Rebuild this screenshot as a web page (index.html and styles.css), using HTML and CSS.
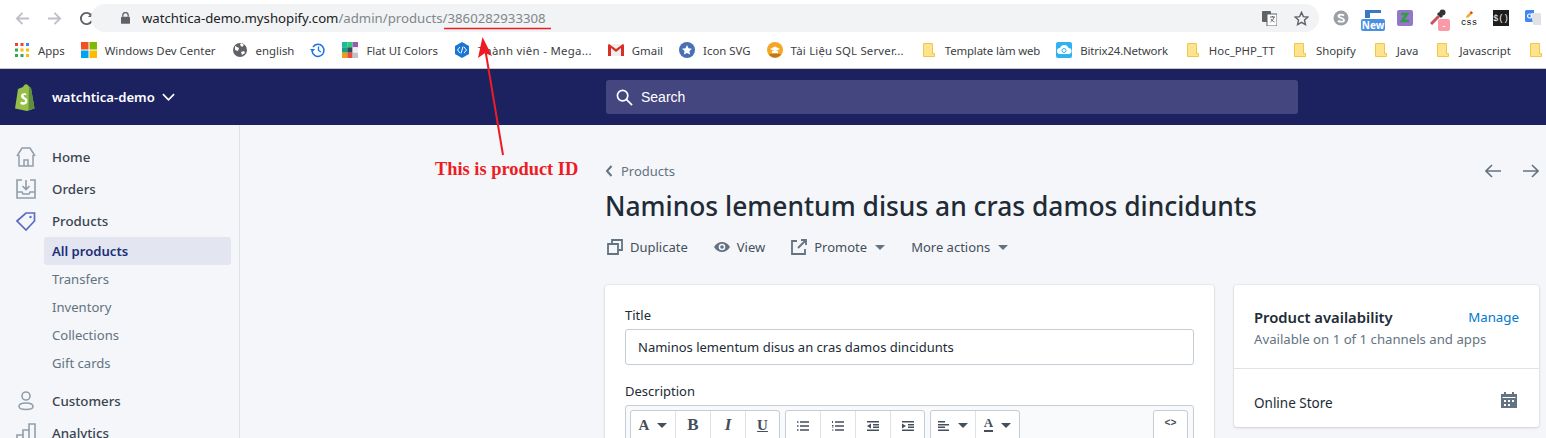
FILE: index.html
```html
<!DOCTYPE html>
<html lang="en">
<head>
    <meta charset="UTF-8">
    <meta name="viewport" content="width=device-width, initial-scale=1.0">
    <title>Product ID</title>
    <link rel="stylesheet" href="styles.css">
</head>
<body>
    <!-- browser chrome -->
    <div class="toolbar">
        <svg class="nav-btn" viewBox="0 0 16 16"><path d="M15 8H2M8 2L2 8l6 6" fill="none" stroke="#bdc1c6" stroke-width="2"/></svg>
        <svg class="nav-btn" viewBox="0 0 16 16"><path d="M1 8h13M8 2l6 6-6 6" fill="none" stroke="#bdc1c6" stroke-width="2"/></svg>
        <svg class="nav-btn reload" viewBox="0 0 16 16"><path d="M13.5 10.5A6 6 0 1 1 12.5 4" fill="none" stroke="#5f6368" stroke-width="2"/><path d="M9.5 6.5H15V1z" fill="#5f6368"/></svg>
        <div class="omnibox">
            <svg class="lock" viewBox="0 0 10 13"><path d="M2 5V3.5a3 3 0 0 1 6 0V5" fill="none" stroke="#5f6368" stroke-width="1.4"/><rect y="5" width="10" height="8" rx="1" fill="#5f6368"/></svg>
            <span class="url"><span class="host">watchtica-demo.myshopify.com</span>/admin/products/3860282933308</span>
            <svg class="omni-icon translate" viewBox="0 0 15 15"><rect width="9" height="11" rx="1" fill="#5f6368"/><rect x="5" y="3" width="10" height="12" fill="#fff" stroke="#5f6368"/><path d="M8 6h5M10.5 5v1M12 6c-.5 2-2 4-3.5 5M9 8c.8 1.5 2 2.5 3.5 3" fill="none" stroke="#5f6368"/></svg>
            <svg class="omni-icon star" viewBox="0 0 16 16"><path d="M8 1.5l2 4.5 4.8.5-3.6 3.2 1 4.8L8 12.1l-4.2 2.4 1-4.8L1.2 6.5 6 6z" fill="none" stroke="#5f6368" stroke-width="1.5"/></svg>
        </div>
        <div class="extensions">
            <svg class="ext ext-skype" viewBox="0 0 16 16"><circle cx="8" cy="8" r="7.5" fill="#9aa0a6"/><path d="M11 5.5C10 4.500 5.500 4 5.500 6c0 2.500 5.500 1.500 5.500 4.200 0 2-4.500 1.800-6 .5" fill="none" stroke="#fff" stroke-width="1.8"/></svg>
            <span class="ext-new"><svg viewBox="0 0 16 8"><path d="M0 8V0h16v3H5v5z" fill="#3b78c2"/></svg><span class="new-badge">New</span></span>
            <svg class="ext ext-z" viewBox="0 0 16 16"><rect width="16" height="16" rx="2" fill="#9575cd"/><path d="M4 4h6L5 11h7" fill="none" stroke="#2e9e3f" stroke-width="2.5"/></svg>
            <span class="ext-dropper"><svg viewBox="0 0 16 16"><path d="M1 15l8-8" stroke="#c9515a" stroke-width="3"/><path d="M8 4l4 4" stroke="#333" stroke-width="3"/><circle cx="12.5" cy="3.5" r="3" fill="#333"/></svg><span class="minus-badge">-</span></span>
            <span class="ext-css"><svg viewBox="0 0 10 10"><path d="M1 9l1-3 5-5 2 2-5 5z" fill="#f5a623"/><path d="M6 2l2 2" stroke="#d8432f" stroke-width="2"/></svg><span>CSS</span></span>
            <span class="ext-jq">$()</span>
            <svg class="ext ext-gt" viewBox="0 0 16 16"><path d="M0 1.5A1.500 1.500 0 0 1 1.500 0H9v12H1.500A1.500 1.500 0 0 1 0 10.500z" fill="#4285f4"/><path d="M6 3h9a1 1 0 0 1 1 1v11H8z" fill="#dfe3e8"/><circle cx="4.5" cy="6" r="2" fill="none" stroke="#fff" stroke-width="1.2"/></svg>
        </div>
    </div>

    <div class="bookmarks">
        <a class="bookmark"><svg class="bm-icon" viewBox="0 0 14 14"><g fill="#ea4335"><rect width="3" height="3"/><rect x="5.5" width="3" height="3"/><rect x="11" width="3" height="3" fill="#4285f4"/></g><g fill="#fbbc05"><rect y="5.5" width="3" height="3" fill="#34a853"/><rect x="5.5" y="5.5" width="3" height="3"/><rect x="11" y="5.5" width="3" height="3"/></g><g fill="#34a853"><rect y="11" width="3" height="3"/><rect x="5.5" y="11" width="3" height="3"/><rect x="11" y="11" width="3" height="3" fill="#fbbc05"/></g></svg>Apps</a>
        <a class="bookmark"><svg class="bm-icon" viewBox="0 0 16 16"><rect width="7.5" height="7.5" fill="#f25022"/><rect x="8.5" width="7.5" height="7.5" fill="#7fba00"/><rect y="8.5" width="7.5" height="7.5" fill="#00a4ef"/><rect x="8.5" y="8.5" width="7.5" height="7.5" fill="#ffb900"/></svg>Windows Dev Center</a>
        <a class="bookmark"><svg class="bm-icon" viewBox="0 0 16 16"><circle cx="8" cy="8" r="7" fill="#5f6368"/><path d="M3 4l4 2-1 3-3-1zM9 10l3-1 1 2-3 2zM9 1l3 2-2 2-2-2z" fill="#fff"/></svg>english</a>
        <a class="bookmark bookmark-icon"><svg class="bm-icon" viewBox="0 0 16 16"><path d="M3 5a6 6 0 1 1-1 4" fill="none" stroke="#1a73e8" stroke-width="1.5"/><path d="M0 7h5L2.5 10z" fill="#1a73e8"/><path d="M8.5 4.5V8.5L11 10" fill="none" stroke="#1a73e8" stroke-width="1.3"/></svg></a>
        <a class="bookmark"><svg class="bm-icon" viewBox="0 0 16 16"><rect width="5.3" height="5.3" fill="#1abc9c"/><rect x="5.3" width="5.3" height="5.3" fill="#2ecc71"/><rect x="10.6" width="5.4" height="5.3" fill="#9b59b6"/><rect y="5.3" width="5.3" height="5.4" fill="#16a085"/><rect x="5.3" y="5.3" width="5.3" height="5.4" fill="#34495e"/><rect x="10.6" y="5.3" width="5.4" height="5.4" fill="#ecf0f1"/><rect y="10.7" width="5.3" height="5.3" fill="#f39c12"/><rect x="5.3" y="10.7" width="5.3" height="5.3" fill="#e74c3c"/><rect x="10.6" y="10.7" width="5.4" height="5.3" fill="#bdc3c7"/></svg>Flat UI Colors</a>
        <a class="bookmark loose"><svg class="bm-icon" viewBox="0 0 16 16"><path d="M8 0l7 4v8l-7 4-7-4V4z" fill="#1976d2"/><path d="M6 5L3.5 8 6 11M10 5l2.5 3L10 11M9 4.5l-2 7" fill="none" stroke="#fff"/></svg>Thành viên - Mega...</a>
        <a class="bookmark"><svg class="bm-icon" viewBox="0 0 16 16"><rect y="2" width="16" height="12" rx="1" fill="#eee"/><path d="M0 3v11h3V6l5 4 5-4v8h3V3l-1-1-7 5-7-5z" fill="#d93025"/></svg>Gmail</a>
        <a class="bookmark"><svg class="bm-icon" viewBox="0 0 16 16"><circle cx="8" cy="8" r="8" fill="#4a6fb5"/><path d="M8 3l1.5 3.300 3.500.4-2.600 2.400.7 3.500L8 10.900l-3.100 1.700.7-3.500L3 6.700l3.500-.4z" fill="#fff"/></svg>Icon SVG</a>
        <a class="bookmark loose-sm"><svg class="bm-icon" viewBox="0 0 16 16"><circle cx="8" cy="8" r="8" fill="#f5a623"/><path d="M2 12a7 7 0 0 0 12 0z" fill="#b9752a"/><path d="M8 4.5l5 2.500-5 2.500-5-2.500zM5 9h6v2H5z" fill="#fff"/></svg>Tài Liệu SQL Server...</a>
        <a class="bookmark tight"><svg class="folder" viewBox="0 0 12 14"><use href="#folder-shape"/></svg>Template làm web</a>
        <a class="bookmark tight"><svg class="bm-icon" viewBox="0 0 16 16"><rect width="16" height="16" rx="2" fill="#2fb2ee"/><path d="M4 12a3 3 0 0 1 0-6 4.5 4.5 0 0 1 8.500 0 3 3 0 0 1 0 6z" fill="#fff"/><circle cx="8" cy="8.5" r="2" fill="none" stroke="#2fb2ee"/></svg>Bitrix24.Network</a>
        <a class="bookmark"><svg class="folder" viewBox="0 0 12 14"><use href="#folder-shape"/></svg>Hoc_PHP_TT</a>
        <a class="bookmark"><svg class="folder" viewBox="0 0 12 14"><use href="#folder-shape"/></svg>Shopify</a>
        <a class="bookmark"><svg class="folder" viewBox="0 0 12 14"><use href="#folder-shape"/></svg>Java</a>
        <a class="bookmark"><svg class="folder" viewBox="0 0 12 14"><use href="#folder-shape"/></svg>Javascript</a>
        <a class="bookmark"><svg class="folder" viewBox="0 0 12 14"><use href="#folder-shape"/></svg></a>
    </div>
    <svg class="defs" width="0" height="0"><defs><path id="folder-shape" d="M.5.5h9v10h2v3H.5z" fill="#fee38f" stroke="#f2c744"/></defs></svg>

    <!-- shopify top bar -->
    <header class="topbar">
        <div class="store">
            <svg class="logo" viewBox="0 0 20 28"><path d="M13.5 3L16 5l3.500 20.500L12 28 0 25.500 3 6l5-2c1-3 4-4 5.500-1z" fill="#95bf47"/><path d="M14 3.5l2 1.500 3.500 20.500L13.500 27z" fill="#5e8e3e"/><path d="M11 10.5c-3-1-5 .5-5 2.500 0 3 4 3 4 5 0 1.500-2.500 1.500-4 .5l-.7 2.500c3 1.500 7.200.5 7.200-3 0-3.500-4-3.500-4-5.200 0-1 1.500-1 3-.5z" fill="#fff"/></svg>
            <span class="store-name">watchtica-demo</span>
            <svg class="chevron" viewBox="0 0 14 8"><path d="M1 1l6 6 6-6" fill="none" stroke="#fff" stroke-width="1.8"/></svg>
        </div>
        <div class="search">
            <svg class="search-icon" viewBox="0 0 18 18"><circle cx="7" cy="7" r="5.5" fill="none" stroke="#fff" stroke-width="1.8"/><path d="M11 11l6 6" stroke="#fff" stroke-width="1.8"/></svg>
            <span>Search</span>
        </div>
    </header>

    <div class="main">
        <nav class="sidebar">
            <a class="nav-item"><svg class="nav-icon" viewBox="0 0 20 20"><path d="M1 9l5-8h8l5 8M3 8v11h14V8M8 19v-6h4v6" fill="none" stroke="#919eab" stroke-width="1.5"/></svg>Home</a>
            <a class="nav-item"><svg class="nav-icon" viewBox="0 0 20 20"><path d="M6 1H1v18h18V1h-5M1 13h5l1 2h6l1-2h5M10 1v9M6.5 7l3.500 3.500L13.500 7" fill="none" stroke="#919eab" stroke-width="1.6"/></svg>Orders</a>
            <a class="nav-item"><svg class="nav-icon" viewBox="0 0 20 20"><path d="M1 10l9-8h8.500v8L10 19z" fill="none" stroke="#5c6ac4" stroke-width="1.7"/><circle cx="14.5" cy="6" r="1.2" fill="#5c6ac4"/></svg>Products</a>
            <div class="subnav">
                <a class="sub-item active">All products</a>
                <a class="sub-item">Transfers</a>
                <a class="sub-item">Inventory</a>
                <a class="sub-item">Collections</a>
                <a class="sub-item">Gift cards</a>
            </div>
            <a class="nav-item"><svg class="nav-icon" viewBox="0 0 20 20"><circle cx="10" cy="5" r="4" fill="none" stroke="#919eab" stroke-width="1.6"/><path d="M3 15.5C3 13 7 12 10 12s7 1 7 3.500c0 2-3 3-7 3s-7-1-7-3z" fill="none" stroke="#919eab" stroke-width="1.6"/></svg>Customers</a>
            <a class="nav-item"><svg class="nav-icon" viewBox="0 0 20 20"><path d="M1 19v-7h6v7M7 19V7h6v12M13 19V1h6v18H1" fill="none" stroke="#919eab" stroke-width="1.6"/></svg>Analytics</a>
        </nav>

        <div class="content">
            <div class="page-top">
                <a class="breadcrumb"><svg class="back" viewBox="0 0 8 12"><path d="M6.5 1L2 6l4.500 5" fill="none" stroke="#637381" stroke-width="2"/></svg>Products</a>
                <div class="pager">
                    <svg viewBox="0 0 16 14"><path d="M16 7H1M7 1L1 7l6 6" fill="none" stroke="#637381" stroke-width="1.6"/></svg>
                    <svg viewBox="0 0 16 14"><path d="M0 7h15M9 1l6 6-6 6" fill="none" stroke="#637381" stroke-width="1.6"/></svg>
                </div>
            </div>
            <h1>Naminos lementum disus an cras damos dincidunts</h1>
            <div class="actions">
                <a class="action"><svg viewBox="0 0 16 16"><path d="M5 5V1h10v10h-4M1 5h10v10H1z" fill="none" stroke="#637381" stroke-width="1.8"/></svg>Duplicate</a>
                <a class="action"><svg viewBox="0 0 16 16"><path d="M0 8c2-3.5 5-5 8-5s6 1.500 8 5c-2 3.500-5 5-8 5s-6-1.500-8-5z" fill="#637381"/><circle cx="8" cy="8" r="3.3" fill="#f4f6f9"/><circle cx="8" cy="8" r="1.8" fill="#637381"/></svg>View</a>
                <a class="action"><svg viewBox="0 0 16 16"><path d="M6 2H1v13h13v-5M7 9l8-8M10 1h5v5" fill="none" stroke="#637381" stroke-width="1.8"/></svg>Promote<i class="caret"></i></a>
                <a class="action"><span>More actions</span><i class="caret"></i></a>
            </div>
            <div class="layout">
                <section class="card main-card">
                    <label class="label">Title</label>
                    <div class="text-input">Naminos lementum disus an cras damos dincidunts</div>
                    <label class="label desc-label">Description</label>
                    <div class="editor">
                        <div class="editor-bar">
                            <div class="btn-group">
                                <span class="rte wide"><b class="serif">A</b><i class="caret dark"></i></span>
                                <span class="rte"><b class="serif big">B</b></span>
                                <span class="rte"><i class="serif big">I</i></span>
                                <span class="rte"><u class="serif strong">U</u></span>
                            </div>
                            <div class="btn-group">
                                <span class="rte"><svg viewBox="0 0 12 10"><path d="M3 1h9M3 5h9M3 9h9" stroke="#454f5b" stroke-width="1.4"/><path d="M0 1h1.5M0 5h1.5M0 9h1.5" stroke="#454f5b" stroke-width="1.4"/></svg></span>
                                <span class="rte"><svg viewBox="0 0 12 10"><path d="M3 1h9M3 5h9M3 9h9" stroke="#454f5b" stroke-width="1.4"/><path d="M.5 0v2M0 4.5h1.5M0 6h1.5M0 9h1.5" stroke="#454f5b"/></svg></span>
                                <span class="rte"><svg viewBox="0 0 12 10"><path d="M0 .7h12M6 3.700h6M6 6.300h6M0 9.300h12" stroke="#454f5b" stroke-width="1.4"/><path d="M4 2.5L0 5l4 2.500z" fill="#454f5b"/></svg></span>
                                <span class="rte"><svg viewBox="0 0 12 10"><path d="M0 .7h12M6 3.700h6M6 6.300h6M0 9.300h12" stroke="#454f5b" stroke-width="1.4"/><path d="M0 2.5L4 5 0 7.500z" fill="#454f5b"/></svg></span>
                            </div>
                            <div class="btn-group">
                                <span class="rte wide"><svg viewBox="0 0 12 10"><path d="M0 .7h7M0 3.700h11M0 6.300h7M0 9.300h11" stroke="#454f5b" stroke-width="1.4"/></svg><i class="caret dark"></i></span>
                                <span class="rte wide"><span class="color-a">A</span><i class="caret dark"></i></span>
                            </div>
                            <div class="btn-group code-group">
                                <span class="rte code">&lt;&gt;</span>
                            </div>
                        </div>
                    </div>
                </section>
                <aside class="card side-card">
                    <div class="side-head">
                        <div class="side-title">
                            <h2>Product availability</h2>
                            <a class="manage">Manage</a>
                        </div>
                        <p>Available on 1 of 1 channels and apps</p>
                    </div>
                    <div class="side-row">
                        <span>Online Store</span>
                        <svg class="calendar" viewBox="0 0 16 16"><path d="M3 0h2v2h6V0h2v2h3v14H0V2h3z" fill="#637381"/><g fill="#fff"><rect x="1.5" y="5" width="13" height="1"/><rect x="3" y="8" width="2" height="2"/><rect x="7" y="8" width="2" height="2"/><rect x="11" y="8" width="2" height="2"/><rect x="3" y="12" width="2" height="2"/><rect x="7" y="12" width="2" height="2"/></g></svg>
                    </div>
                </aside>
            </div>
        </div>
    </div>

    <!-- red annotation drawn on top of the screenshot -->
    <svg class="annotation" viewBox="0 0 1546 438">
        <path d="M444 28.5h107" stroke="#ed1c24" stroke-width="1.5"/>
        <path d="M503 155L485 48" stroke="#ed1c24" stroke-width="2"/>
        <path d="M482.5 37L478 58l7-5 7 3z" fill="#ed1c24"/>
    </svg>
    <div class="annotation-text">This is product ID</div>
</body>
</html>
```

FILE: styles.css
```css
html, body {
    margin: 0;
    height: 438px;
    overflow: hidden;
}
body {
    font-family: "Noto Sans", "Open Sans", sans-serif;
    font-size: 14px;
    color: #212b36;
    background-color: #f4f6f9;
}
a {
    color: inherit;
    text-decoration: none;
}
h1, h2, p {
    margin: 0;
}
.defs {
    position: absolute;
}

/* browser chrome */
.toolbar {
    display: flex;
    align-items: center;
    height: 32px;
    padding: 4px 5px 0 15px;
    box-sizing: border-box;
    background-color: #fff;
}
.nav-btn {
    width: 15px;
    height: 15px;
    margin-right: 17px;
}
.nav-btn.reload {
    margin-right: -3px;
}
.omnibox {
    display: flex;
    align-items: center;
    width: 1228px;
    height: 28px;
    box-sizing: border-box;
    padding: 0 10px 0 30px;
    border-radius: 14px;
    background-color: #f1f3f4;
}
.lock {
    width: 9px;
    height: 12px;
    margin-right: 12px;
}
.url {
    flex: 1;
    font-size: 13.2px;
    color: #80868b;
    white-space: nowrap;
}
.host {
    color: #202124;
}
.omni-icon {
    width: 15px;
    height: 15px;
}
.translate {
    margin-right: 17px;
}
.extensions {
    display: flex;
    align-items: center;
    margin-left: 14px;
    gap: 12px;
}
.ext {
    width: 16px;
    height: 16px;
}
.ext-new {
    position: relative;
    width: 24px;
    height: 22px;
    margin-top: 4px;
}
.ext-new svg {
    display: block;
    width: 16px;
    height: 10px;
    margin-left: 4px;
}
.new-badge {
    position: absolute;
    left: 0;
    bottom: 0;
    width: 24px;
    height: 12px;
    border-radius: 2px;
    background-color: #4a90e2;
    color: #fff;
    font-size: 10px;
    font-weight: 700;
    line-height: 12px;
    text-align: center;
}
.ext-dropper {
    position: relative;
    width: 20px;
    height: 22px;
    margin: 4px 0 0 5px;
}
.ext-dropper svg {
    display: block;
    width: 16px;
    height: 16px;
}
.minus-badge {
    position: absolute;
    right: 0;
    bottom: 0;
    width: 12px;
    height: 12px;
    border-radius: 2px;
    background-color: #f99aa6;
    color: #fff;
    font-size: 10px;
    line-height: 12px;
    text-align: center;
}
.ext-css {
    display: flex;
    flex-direction: column;
    align-items: center;
    width: 16px;
    margin-left: -1px;
    font-family: "Liberation Mono", monospace;
    font-size: 8px;
    line-height: 8px;
    color: #000;
}
.ext-css span {
    text-transform: lowercase;
    font-size: 9px;
}
.ext-css svg {
    width: 9px;
    height: 9px;
}
.ext-jq {
    width: 16px;
    height: 16px;
    margin-left: 4px;
    background-color: #1d1d1d;
    color: #fff;
    font-family: "Liberation Mono", monospace;
    font-size: 8.5px;
    line-height: 18px;
    text-align: center;
}
.ext-gt {
    margin-left: 4px;
}

.bookmarks {
    display: flex;
    align-items: center;
    gap: 16px;
    height: 37px;
    padding-left: 15px;
    box-sizing: border-box;
    background-color: #fff;
    border-bottom: 1px solid #c4c6c8;
    white-space: nowrap;
    overflow: hidden;
}
.bookmark {
    display: flex;
    align-items: center;
    flex-shrink: 0;
    font-size: 11.4px;
    color: #3c4043;
}
.loose {
    letter-spacing: 0.3px;
}
.loose-sm {
    letter-spacing: 0.2px;
}
.tight {
    letter-spacing: -0.15px;
}
.bm-icon {
    width: 16px;
    height: 16px;
    margin-right: 8px;
}
.bookmark-icon .bm-icon {
    margin-right: 0;
}
.bookmark:first-child .bm-icon {
    width: 14px;
    height: 14px;
    margin-right: 9px;
}
.folder {
    width: 12px;
    height: 14px;
    margin-right: 10px;
    margin-left: 3px;
}

/* shopify top bar */
.topbar {
    display: flex;
    align-items: center;
    height: 56px;
    background-color: #1c2260;
}
.store {
    display: flex;
    align-items: center;
    width: 606px;
    padding-left: 15px;
    box-sizing: border-box;
}
.logo {
    width: 20px;
    height: 28px;
    margin-right: 17px;
}
.store-name {
    font-size: 13.1px;
    font-weight: 600;
    color: #fff;
}
.chevron {
    width: 13px;
    height: 8px;
    margin-left: 7px;
}
.search {
    display: flex;
    align-items: center;
    width: 692px;
    height: 34px;
    padding-left: 10px;
    box-sizing: border-box;
    border-radius: 3px;
    background-color: #43467f;
    color: #fff;
    font-family: "Liberation Sans", Arial, sans-serif;
    font-size: 14px;
}
.search-icon {
    width: 17px;
    height: 17px;
    margin-right: 8px;
}

/* sidebar */
.main {
    display: flex;
    height: 313px;
    overflow: hidden;
}
.sidebar {
    width: 240px;
    flex-shrink: 0;
    padding-top: 16px;
    box-sizing: border-box;
    border-right: 1px solid #dfe3e8;
}
.nav-item {
    display: flex;
    align-items: center;
    height: 32px;
    padding-left: 16px;
    font-size: 13.3px;
    font-weight: 500;
    color: #3a4450;
}
.nav-icon {
    width: 20px;
    height: 20px;
    margin-right: 16px;
}
.subnav {
    display: flex;
    flex-direction: column;
    margin: 0 8px 8px 44px;
}
.sub-item {
    height: 28px;
    padding-left: 8px;
    font-size: 13.1px;
    line-height: 28px;
    color: #637381;
}
.active {
    border-radius: 3px;
    background-color: #e3e6f1;
    color: #202e78;
    font-weight: 600;
}

/* page */
.content {
    flex: 1;
    padding: 36px 9px 0 365px;
}
.page-top {
    display: flex;
    justify-content: space-between;
    align-items: center;
    height: 20px;
}
.breadcrumb {
    display: flex;
    align-items: center;
    font-size: 13px;
    color: #637381;
}
.back {
    width: 8px;
    height: 12px;
    margin-right: 8px;
}
.pager {
    display: flex;
    gap: 22px;
}
.pager svg {
    width: 16px;
    height: 14px;
}
h1 {
    margin-top: 7px;
    font-size: 26.4px;
    font-weight: 500;
    line-height: 36px;
    white-space: nowrap;
}
.actions {
    display: flex;
    align-items: center;
    height: 24px;
    margin-top: 11px;
}
.action {
    display: flex;
    align-items: center;
    margin-right: 24px;
    padding-left: 2px;
    font-size: 13px;
    color: #454f5b;
}
.action svg {
    width: 16px;
    height: 16px;
    margin-right: 7px;
}
.caret {
    width: 0;
    height: 0;
    margin-left: 8px;
    border-left: 5px solid transparent;
    border-right: 5px solid transparent;
    border-top: 5px solid #637381;
}
.layout {
    display: flex;
    gap: 20px;
    margin-top: 26px;
    width: 934px;
}
.card {
    border-radius: 3px;
    background-color: #fff;
    box-shadow: 0 0 0 1px rgba(63, 63, 68, 0.05), 0 1px 3px 0 rgba(63, 63, 68, 0.15);
}
.main-card {
    width: 609px;
    height: 200px;
    padding: 20px;
    box-sizing: border-box;
}
.label {
    display: block;
    height: 24px;
    font-size: 13px;
    line-height: 20px;
}
.text-input {
    height: 36px;
    padding-left: 12px;
    box-sizing: border-box;
    border: 1px solid #c4cdd5;
    border-radius: 3px;
    font-size: 13px;
    line-height: 34px;
    white-space: nowrap;
}
.desc-label {
    margin-top: 16px;
}
.editor {
    height: 60px;
    padding: 4px;
    box-sizing: border-box;
    border: 1px solid #c4cdd5;
    border-radius: 3px 3px 0 0;
    background-color: #f9fafb;
}
.editor-bar {
    display: flex;
    gap: 5px;
}
.btn-group {
    display: flex;
    height: 40px;
    border: 1px solid #c4cdd5;
    border-radius: 3px;
    background-color: #fff;
}
.code-group {
    margin-left: auto;
    margin-right: 1px;
}
.rte {
    display: flex;
    align-items: flex-start;
    justify-content: center;
    width: 35px;
    height: 28px;
    padding-top: 5px;
    box-sizing: border-box;
    border-right: 1px solid #dfe3e8;
    color: #454f5b;
    font-size: 15px;
}
.rte.wide {
    width: 45px;
}
.rte:last-child {
    width: 33px;
    border-right: 0;
}
.rte.wide:last-child {
    width: 43px;
}
.rte svg {
    width: 12px;
    height: 10px;
    margin-top: 5px;
}
.serif {
    font-family: "Liberation Serif", serif;
    line-height: 18px;
}
.big {
    font-size: 17px;
    font-weight: 700;
}
.strong {
    font-weight: 700;
}
.caret.dark {
    margin-top: 7px;
    border-top-color: #454f5b;
}
.color-a {
    height: 14px;
    border-bottom: 2px solid #454f5b;
    font-family: "Liberation Serif", serif;
    font-size: 13px;
    font-weight: 700;
    line-height: 14px;
}
.code {
    padding-top: 7px;
    font-family: "Liberation Mono", monospace;
    font-size: 10px;
    font-weight: 700;
}

/* right hand card */
.side-card {
    width: 305px;
    height: 142px;
}
.side-head {
    height: 84px;
    padding: 20px 20px 0;
    box-sizing: border-box;
    border-bottom: 1px solid #dfe3e8;
}
.side-title {
    display: flex;
    justify-content: space-between;
    align-items: center;
    height: 24px;
}
h2 {
    font-size: 14.8px;
    font-weight: 600;
}
.manage {
    font-size: 13.3px;
    color: #007ace;
}
.side-head p {
    margin-top: 1px;
    font-size: 13.2px;
    color: #637381;
}
.side-row {
    display: flex;
    justify-content: space-between;
    align-items: center;
    height: 58px;
    padding: 10px 22px 0 20px;
    box-sizing: border-box;
    font-size: 13.5px;
}
.calendar {
    width: 16px;
    height: 16px;
    margin-bottom: 6px;
}

/* annotation */
.annotation {
    position: absolute;
    left: 0;
    top: 0;
    width: 1546px;
    height: 438px;
    pointer-events: none;
}
.annotation-text {
    position: absolute;
    left: 435px;
    top: 158px;
    font-family: "Liberation Serif", serif;
    font-size: 18.4px;
    font-weight: 700;
    line-height: 22px;
    color: #ed1c24;
}
```
